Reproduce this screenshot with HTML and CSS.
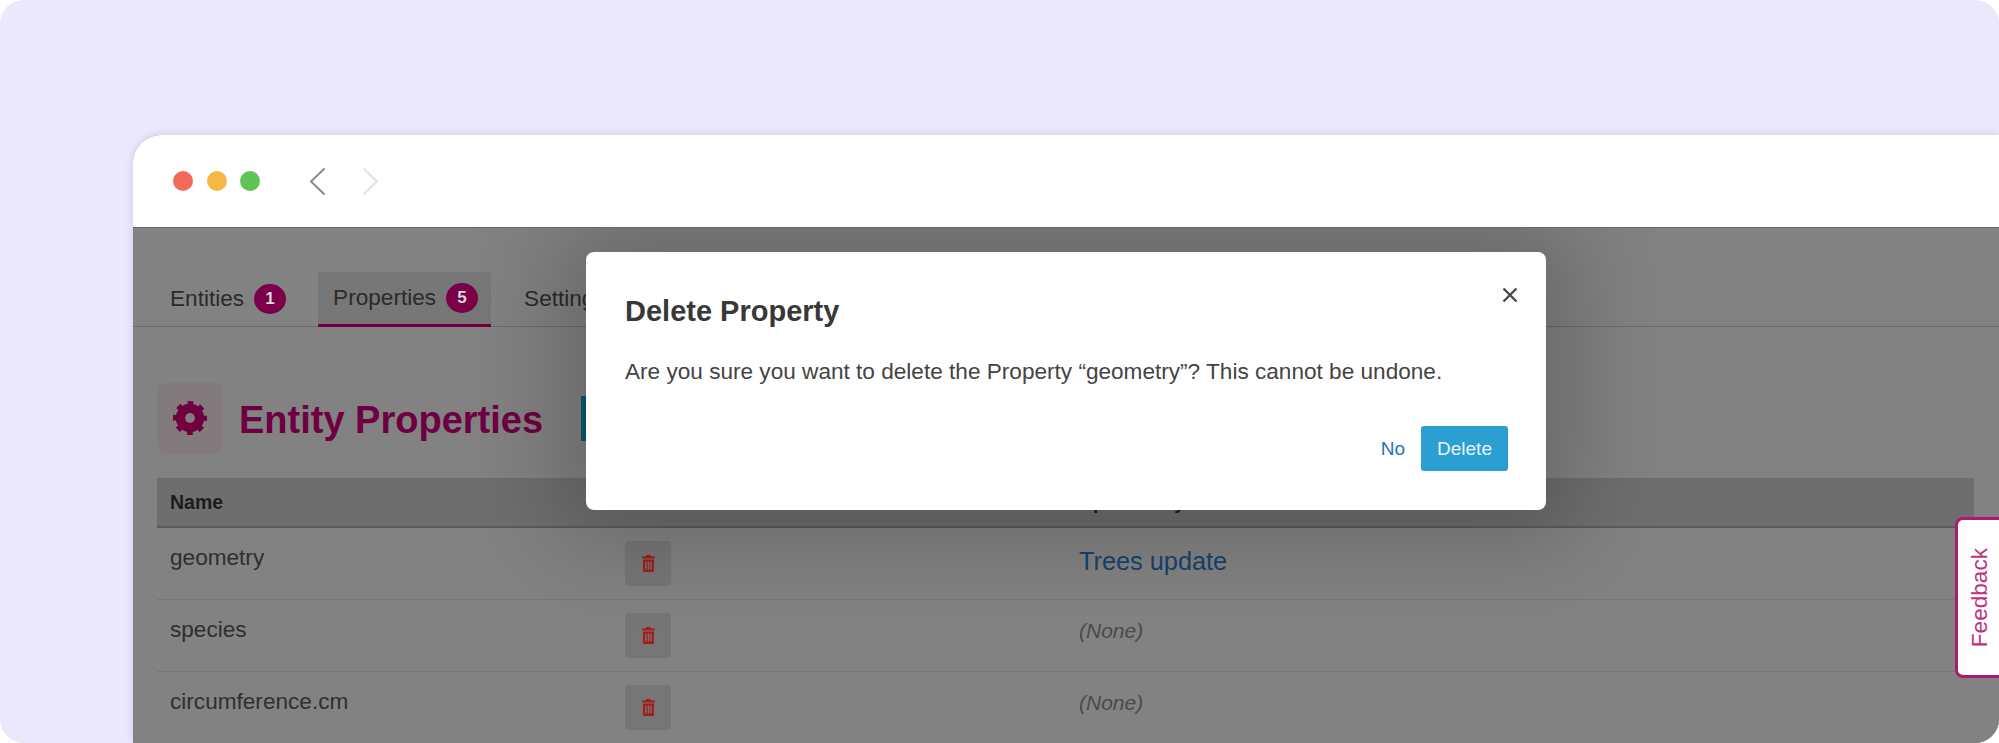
FILE: index.html
```html
<!DOCTYPE html>
<html lang="en">
<head>
    <meta charset="UTF-8">
    <meta name="viewport" content="width=device-width, initial-scale=1.0">
    <title>Delete Property</title>
    <link rel="stylesheet" href="styles.css">
</head>
<body>
    <div class="frame">
        <div class="browser">
            <div class="titlebar">
                <span class="dot dot-red"></span>
                <span class="dot dot-yellow"></span>
                <span class="dot dot-green"></span>
                <svg class="arrow" width="17" height="29" viewBox="0 0 17 29"><path d="M15.500 1.500 2 14.500l13.500 13" fill="none" stroke="#8a8a8a" stroke-width="2"/></svg>
                <svg class="arrow arrow-next" width="17" height="29" viewBox="0 0 17 29"><path d="M1.500 1.500 15 14.500l-13.500 13" fill="none" stroke="#e2e2e2" stroke-width="2"/></svg>
            </div>
            <div class="content">
                <div class="tabs">
                    <div class="tab tab-first">Entities <span class="badge">1</span></div>
                    <div class="tab tab-active">Properties <span class="badge">5</span></div>
                    <div class="tab tab-last">Settings</div>
                </div>
                <div class="heading">
                    <div class="heading-icon">
                        <svg width="34" height="34" viewBox="-12 -12 24 24" fill="none" stroke="#70003f">
                            <circle r="6.750" stroke-width="6.500"/>
                            <circle r="10.500" stroke-width="3" stroke-dasharray="4 4.247" stroke-dashoffset="2"/>
                        </svg>
                    </div>
                    <h1>Entity Properties</h1>
                    <button class="teal-btn">Add Property</button>
                </div>
                <div class="table">
                    <div class="row row-head">
                        <div>Name</div>
                        <div></div>
                        <div>Updated by</div>
                    </div>
                    <div class="row">
                        <div class="cell-name">geometry</div>
                        <div><button class="trash"><svg width="13" height="17" viewBox="0 0 13 17"><path fill="#a01d1a" fill-rule="evenodd" d="M4.500 0h4l.7 1.500H13v2H0v-2h3.800zM1 4.500h11V15.500a1.500 1.500 0 0 1-1.500 1.500h-8A1.500 1.500 0 0 1 1 15.500zM3.300 6.500v8h1.400v-8zm2.500 0v8h1.400v-8zm2.500 0v8h1.400v-8z"/></svg></button></div>
                        <div class="cell-link">Trees update</div>
                    </div>
                    <div class="row">
                        <div class="cell-name">species</div>
                        <div><button class="trash"><svg width="13" height="17" viewBox="0 0 13 17"><path fill="#a01d1a" fill-rule="evenodd" d="M4.500 0h4l.7 1.500H13v2H0v-2h3.800zM1 4.500h11V15.500a1.500 1.500 0 0 1-1.500 1.500h-8A1.500 1.500 0 0 1 1 15.500zM3.300 6.500v8h1.400v-8zm2.500 0v8h1.400v-8zm2.500 0v8h1.400v-8z"/></svg></button></div>
                        <div class="cell-none">(None)</div>
                    </div>
                    <div class="row">
                        <div class="cell-name">circumference.cm</div>
                        <div><button class="trash"><svg width="13" height="17" viewBox="0 0 13 17"><path fill="#a01d1a" fill-rule="evenodd" d="M4.500 0h4l.7 1.500H13v2H0v-2h3.800zM1 4.500h11V15.500a1.500 1.500 0 0 1-1.500 1.500h-8A1.500 1.500 0 0 1 1 15.500zM3.300 6.500v8h1.400v-8zm2.500 0v8h1.400v-8zm2.500 0v8h1.400v-8z"/></svg></button></div>
                        <div class="cell-none">(None)</div>
                    </div>
                </div>
                <div class="modal">
                    <svg class="modal-close" width="16" height="16" viewBox="0 0 16 16"><path d="M1.500 1.500l13 13m0-13l-13 13" stroke="#4a4a4a" stroke-width="2.400"/></svg>
                    <h2>Delete Property</h2>
                    <p>Are you sure you want to delete the Property “geometry”? This cannot be undone.</p>
                    <div class="modal-actions">
                        <span class="btn-no">No</span>
                        <button class="btn-delete">Delete</button>
                    </div>
                </div>
            </div>
        </div>
        <div class="feedback"><span>Feedback</span></div>
    </div>
</body>
</html>
```

FILE: styles.css
```css
html, body {
    margin: 0;
    height: 100%;
    overflow: hidden;
    background: #fff;
}

body {
    font-family: "Liberation Sans", Arial, sans-serif;
}

.frame {
    position: relative;
    height: 743px;
    box-sizing: border-box;
    padding: 135px 0 0 133px;
    background: #ebe7fd;
    border-radius: 24px;
    overflow: hidden;
}

.browser {
    height: 608px;
    background: #828282;
    border-top-left-radius: 28px;
    box-shadow: 0 0 8px rgba(0, 0, 0, 0.12);
    overflow: hidden;
}

.titlebar {
    display: flex;
    align-items: center;
    height: 93px;
    padding-left: 40px;
    background: #fff;
    border-bottom: 1px solid #6b6b6b;
    box-sizing: border-box;
}

.dot {
    width: 20px;
    height: 20px;
    border-radius: 50%;
    margin-right: 13.5px;
}

.dot-red { background: #f26a5c; }
.dot-yellow { background: #f6b844; }
.dot-green { background: #5ec455; }

.arrow {
    margin-left: 35px;
}

.arrow-next {
    margin-left: 36px;
}

.content {
    position: relative;
    height: 515px;
    padding: 0 25px 0 24px;
    background: #828282;
    overflow: hidden;
}

.tabs {
    display: flex;
    height: 99px;
    margin: 0 -25px 0 -24px;
    padding-left: 21px;
    align-items: flex-end;
    border-bottom: 1px solid #6a6a6a;
    box-sizing: border-box;
}

.tab {
    display: flex;
    align-items: center;
    height: 55px;
    padding: 0 16px;
    font-size: 22.6px;
    color: #2b2b2b;
    box-sizing: border-box;
}

.tab-first {
    margin-right: 16px;
}

.tab-active {
    padding: 0 13px 0 15px;
    margin-right: 17px;
    margin-bottom: -1px;
    background: #777;
    border-bottom: 3px solid #70003f;
}

.badge {
    display: inline-flex;
    align-items: center;
    justify-content: center;
    width: 32px;
    height: 30px;
    margin-left: 10px;
    border-radius: 50%;
    background: #7a0049;
    color: #d8d8d8;
    font-size: 17px;
    font-weight: bold;
}

.heading {
    display: flex;
    align-items: center;
    height: 70px;
    margin-top: 56px;
}

.heading-icon {
    display: flex;
    align-items: center;
    justify-content: center;
    width: 66px;
    height: 70px;
    border-radius: 8px;
    background: #837a7e;
}

h1 {
    margin: 4px 0 0 16px;
    font-size: 38px;
    color: #6e0042;
}

.teal-btn {
    height: 45px;
    margin-left: 38px;
    padding: 0 20px;
    border: none;
    background: #0a5a72;
    color: #ccc;
    font-size: 18px;
}

.table {
    margin-top: 25px;
}

.row {
    display: grid;
    grid-template-columns: 455px 454px 1fr;
    height: 72px;
    padding-left: 13px;
    align-items: center;
    border-bottom: 1px solid #767676;
    box-sizing: border-box;
}

.row-head {
    height: 50px;
    background: #6e6e6e;
    border-bottom: 2px solid #5b5b5b;
    font-size: 19.500px;
    font-weight: bold;
    color: #1c1c1c;
}

.cell-name {
    margin-bottom: 11px;
    font-size: 22.6px;
    color: #2f2f2f;
}

.cell-link {
    margin-bottom: 5px;
    font-size: 25.300px;
    color: #17426c;
}

.cell-none {
    margin-bottom: 10px;
    font-size: 21px;
    font-style: italic;
    color: #4a4a4a;
}

.trash {
    display: flex;
    align-items: center;
    justify-content: center;
    width: 46px;
    height: 45px;
    padding: 0;
    border: none;
    border-radius: 3px;
    background: #767676;
}

/* dialog and its shadow sit over the page */
.modal {
    position: absolute;
    left: 453px;
    top: 24px;
    width: 960px;
    height: 258px;
    box-sizing: border-box;
    padding: 43px 38px 0 39px;
    background: #fff;
    border-radius: 8px;
    box-shadow: 0 0 90px 30px rgba(0, 0, 0, 0.2);
}

.modal h2 {
    margin: 0;
    font-size: 29px;
    line-height: 32px;
    color: #383838;
}

.modal p {
    margin: 32px 0 0;
    font-size: 22.6px;
    line-height: 26px;
    color: #444;
}

.modal-close {
    position: absolute;
    top: 35px;
    right: 28px;
}

.modal-actions {
    display: flex;
    justify-content: flex-end;
    align-items: center;
    gap: 16px;
    margin-top: 41px;
}

.btn-no {
    font-size: 19px;
    color: #1f74bd;
}

.btn-delete {
    width: 87px;
    height: 45px;
    border: none;
    border-radius: 3px;
    background: #2b9fd2;
    color: #e8f4fa;
    font-family: inherit;
    font-size: 19px;
}

.feedback {
    position: absolute;
    right: -8px;
    top: 517px;
    display: flex;
    align-items: center;
    justify-content: center;
    width: 52px;
    height: 161px;
    box-sizing: border-box;
    padding-right: 2px;
    background: #fff;
    border: 3px solid #ae1a6d;
    border-radius: 8px;
    color: #c0307f;
    font-size: 22.6px;
}

.feedback span {
    writing-mode: vertical-rl;
    transform: rotate(180deg);
}
```
